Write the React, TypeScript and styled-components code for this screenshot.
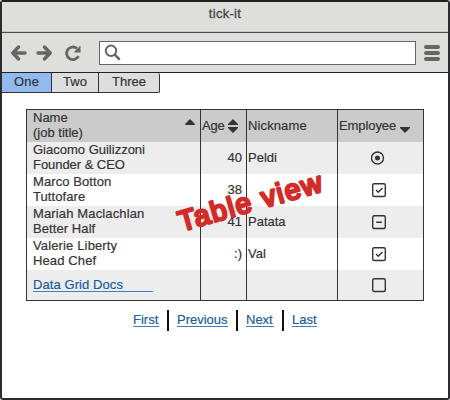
import React from "react";
import styled, { createGlobalStyle } from "styled-components";

const GlobalStyle = createGlobalStyle`
  * { box-sizing: border-box; }
  body { margin: 0; background: #fff; }
`;

const Browser = styled.div`
  width: 450px;
  height: 400px;
  border: 2px solid #2c2b2d;
  border-top-color: #231f20;
  border-radius: 3px;
  background: #fff;
  overflow: hidden;
  color: #343434;
  font: 13px/15px "Liberation Sans", Arial, sans-serif;
  -webkit-text-stroke: 0.2px currentColor;
`;

const TitleBar = styled.header`
  height: 31px;
  padding-top: 4px;
  background: #dededc;
  border-bottom: 1px solid #4a4a4a;
  box-shadow: inset 0 -1px #c6c6c4;
  text-align: center;
  color: #444;
  letter-spacing: 0.3px;
  -webkit-text-stroke: 0.3px currentColor;
`;

const Toolbar = styled.div`
  display: flex;
  align-items: center;
  height: 40px;
  padding: 0 7px 0 9px;
  background: #dededc;
  border-bottom: 1px solid #222;
`;

const AddressBar = styled.div`
  display: flex;
  align-items: center;
  width: 317px;
  height: 24px;
  margin: 0 8px 0 17px;
  padding-left: 4px;
  background: #fff;
  border: 1px solid #666;
`;

const Icon = styled.svg<{ $gap?: number }>`
  display: block;
  flex: none;
  margin-right: ${(p) => p.$gap ?? 0}px;
`;

const SortIcon = styled(Icon)<{ $left?: number; $shift?: number }>`
  margin-left: ${(p) => p.$left ?? 0}px;
  margin-top: ${(p) => p.$shift ?? 0}px;
`;

const Tabs = styled.nav`
  display: flex;
  height: 20px;
`;

const Tab = styled.div<{ $width: number; $active?: boolean }>`
  width: ${(p) => p.$width}px;
  padding-top: 1px;
  text-align: center;
  background: ${(p) => (p.$active ? "#93b9f1" : "#dedede")};
  border: solid #333;
  border-width: 0 1px 1px 0;
  &:last-child { border-radius: 0 2px 2px 0; }
`;

const Text = styled.span<{ $track?: number }>`
  letter-spacing: ${(p) => p.$track ?? 0}px;
  white-space: nowrap;
`;

const GridFrame = styled.section`
  position: relative;
  width: 398px;
  height: 192px;
  margin: 16px 0 0 24px;
  border: 1px solid #333;
`;

const Row = styled.div<{ $tone: string }>`
  display: grid;
  grid-template-columns: 174px 46px 91px 85px;
  height: 32px;
  background: ${(p) => p.$tone};
  &:last-of-type { height: 30px; }
`;

const Cell = styled.div<{ $align?: string; $pad?: string }>`
  display: flex;
  align-items: center;
  justify-content: ${(p) => p.$align ?? "flex-start"};
  padding: ${(p) => p.$pad ?? "0 1px 2px"};
  border-right: 1px solid #333;
  &:last-child { border-right: 0; }
`;

const HeadCell = styled(Cell)`
  padding: ${(p) => p.$pad ?? "0 1px 1px"};
`;

const Stack = styled.div`
  display: flex;
  flex-direction: column;
  flex: 1;
`;

const DocsLink = styled.a`
  width: 120px;
  height: 15px;
  color: #1b5e9b;
  border-bottom: 1px solid #3c7fba;
`;

const Stamp = styled.svg`
  position: absolute;
  left: 143px;
  top: 55px;
  font: 28.5px "Liberation Sans", Arial, sans-serif;
`;

const Pager = styled.nav`
  display: flex;
  height: 21px;
  margin: 9px 0 0 131px;
`;

const PageLink = styled.a<{ $width: number }>`
  width: ${(p) => p.$width}px;
  height: 17px;
  padding-top: 2px;
  color: #1b5e9b;
  border-bottom: 1px solid #3c7fba;
`;

const Divider = styled.span`
  width: 2px;
  height: 21px;
  margin: 0 8px;
  background: #111;
`;

const Arrow = ({ flip }: { flip?: boolean }) => (
  <Icon width="16" height="16" viewBox="0 0 16 16" $gap={flip ? 12 : 9} fill="none" stroke="#666" strokeWidth="3.4" strokeLinecap="round" strokeLinejoin="round">
    <path d={flip ? "M2 8h11.500M8.500 2L14.200 8L8.500 14" : "M14 8H2.500M7.500 2L1.800 8L7.500 14"} />
  </Icon>
);

type Mark = "radio" | "check" | "dash" | "empty";

const Control = ({ mark }: { mark: Mark }) => (
  <Icon width="16" height="16" viewBox="0 0 16 16" fill="none" stroke="#343434" strokeWidth="1.4">
    {mark === "radio" ? (
      <>
        <circle cx="6.500" cy="8" r="6" />
        <circle cx="6.500" cy="8" r="2.500" fill="#343434" stroke="none" />
      </>
    ) : (
      <rect x="1.700" y="1.700" width="12.600" height="12.800" rx="1.500" />
    )}
    {mark === "check" && <path d="M5 8l2.200 2.200L11.500 6" />}
    {mark === "dash" && <path d="M5.200 8.300h5.600" />}
  </Icon>
);

interface Person {
  name: string;
  title: string;
  age: string;
  nick: string;
  mark: Mark;
  track: [number, number];
}

const people: Person[] = [
  { name: "Giacomo Guilizzoni", title: "Founder & CEO", age: "40", nick: "Peldi", mark: "radio", track: [0, -0.05] },
  { name: "Marco Botton", title: "Tuttofare", age: "38", nick: "", mark: "check", track: [0.08, 0.08] },
  { name: "Mariah Maclachlan", title: "Better Half", age: "41", nick: "Patata", mark: "dash", track: [0.14, 0.08] },
  { name: "Valerie Liberty", title: "Head Chef", age: ":)", nick: "Val", mark: "check", track: [0.14, 0.12] },
];

export default function App() {
  return (
    <>
      <GlobalStyle />
      <Browser>
        <TitleBar>tick-it</TitleBar>
        <Toolbar>
          <Arrow />
          <Arrow flip />
          <Icon width="18" height="18" viewBox="0 0 18 18" fill="none" stroke="#666" strokeWidth="2.800">
            <path d="M14.500 12.200A6.300 6.300 0 1 1 13 4.500" />
            <path d="M16.500 1.500V8.500H9.500Z" fill="#666" stroke="none" />
          </Icon>
          <AddressBar>
            <Icon width="17" height="17" viewBox="0 0 17 17" fill="none" stroke="#666" strokeWidth="2">
              <circle cx="7" cy="6.800" r="5.200" />
              <path d="M11 10.800L15 14.800" strokeWidth="2.600" strokeLinecap="round" />
            </Icon>
          </AddressBar>
          <Icon width="16" height="16" viewBox="0 0 16 16" fill="#666">
            <rect y="0" width="16" height="4" rx="2" />
            <rect y="6" width="16" height="4" rx="2" />
            <rect y="12" width="16" height="4" rx="2" />
          </Icon>
        </Toolbar>
        <Tabs>
          <Tab $width={50} $active><Text $track={0.15}>One</Text></Tab>
          <Tab $width={47}><Text>Two</Text></Tab>
          <Tab $width={61}><Text>Three</Text></Tab>
        </Tabs>
        <GridFrame>
          <Row $tone="#cbcbcb">
            <HeadCell $pad="0 5px 2px 6px">
              <Stack><Text>Name</Text><Text>(job title)</Text></Stack>
              <SortIcon width="10" height="6" viewBox="0 0 10 6" fill="#343434" $shift={-6}><path d="M5 0L10 5Q10 6 9 6H1Q0 6 0 5Z" /></SortIcon>
            </HeadCell>
            <HeadCell>
              <Text $track={-0.15}>Age</Text>
              <SortIcon width="10" height="14" viewBox="0 0 10 14" fill="#343434" $left={3}>
                <path d="M5 0L10 5V6H0V5ZM0 8H10V9L5 14L0 9Z" />
              </SortIcon>
            </HeadCell>
            <HeadCell><Text $track={0.12}>Nickname</Text></HeadCell>
            <HeadCell $pad="0 0 1px 1px">
              <Text $track={-0.08}>Employee</Text>
              <SortIcon width="10" height="6" viewBox="0 0 10 6" fill="#343434" $left={4} $shift={8}><path d="M0 0H10V1L5 6L0 1Z" /></SortIcon>
            </HeadCell>
          </Row>
          {people.map((p, i) => (
            <Row key={p.name} $tone={i % 2 ? "#fff" : "#ededed"}>
              <Cell $pad="0 6px 2px">
                <Stack><Text $track={p.track[0]}>{p.name}</Text><Text $track={p.track[1]}>{p.title}</Text></Stack>
              </Cell>
              <Cell $align="flex-end" $pad="0 4px 2px"><Text>{p.age}</Text></Cell>
              <Cell><Text>{p.nick}</Text></Cell>
              <Cell $pad="0 0 0 33px"><Control mark={p.mark} /></Cell>
            </Row>
          ))}
          <Row $tone="#ededed">
            <Cell $pad="0 6px 1px"><DocsLink><Text $track={0.08}>Data Grid Docs</Text></DocsLink></Cell>
            <Cell />
            <Cell />
            <Cell $pad="0 0 0 33px"><Control mark="empty" /></Cell>
          </Row>
          <Stamp width="166" height="80" viewBox="0 0 166 80" fill="#d32a2a" stroke="#d32a2a" strokeWidth="2.600" strokeLinejoin="round">
            <text transform="translate(11.500 66.500) rotate(-16)" textLength="148">Table view</text>
          </Stamp>
        </GridFrame>
        <Pager>
          <PageLink $width={26}><Text>First</Text></PageLink>
          <Divider />
          <PageLink $width={51}><Text>Previous</Text></PageLink>
          <Divider />
          <PageLink $width={28}><Text>Next</Text></PageLink>
          <Divider />
          <PageLink $width={25}><Text>Last</Text></PageLink>
        </Pager>
      </Browser>
    </>
  );
}
